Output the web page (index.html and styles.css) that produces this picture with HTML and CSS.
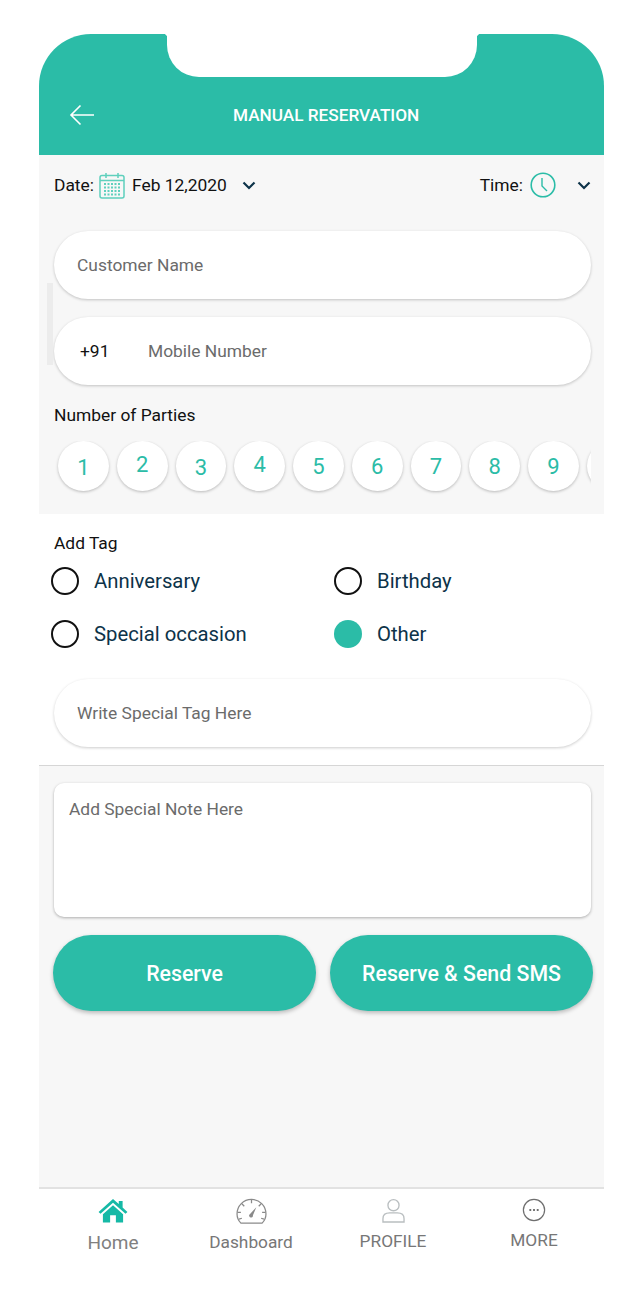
FILE: index.html
```html
<!DOCTYPE html>
<html lang="en">

<head>
    <meta charset="UTF-8" />
    <title>Manual Reservation</title>
    <link rel="stylesheet" href="styles.css">
</head>

<body>
    <div class="phone">

        <header class="topbar">
            <div class="notch"></div>
            <svg class="back" width="26" height="22" viewBox="0 0 26 22" fill="none" stroke="#fff" stroke-width="1.6">
                <path d="M25 11H2M11.500 1.500 2 11l9.500 9.500" />
            </svg>
            <h1>MANUAL RESERVATION</h1>
        </header>

        <section class="grey-part">
            <div class="when">
                <div class="when-left">
                    <span>Date:</span>
                    <svg class="cal" width="26" height="27" viewBox="0 0 26 27" fill="none" stroke="#5fd0bd" stroke-width="1.500">
                        <rect x="1" y="3.500" width="24" height="22.500" rx="2" />
                        <path d="M1 8.500h24M7 1v5M19 1v5" />
                        <path d="M5 12h16M5 15.500h16M5 19h16M5 22.500h16" stroke-width="1.800" stroke-dasharray="2 1.500" />
                    </svg>
                    <span class="date">Feb 12,2020</span>
                    <svg class="chev" width="14" height="9" viewBox="0 0 14 9" fill="none" stroke="#0d3349" stroke-width="2.200">
                        <path d="M1.500 1.500 7 7l5.500-5.500" />
                    </svg>
                </div>
                <div class="when-right">
                    <span>Time:</span>
                    <svg class="clock" width="26" height="26" viewBox="0 0 26 26" fill="none" stroke="#2bbca7" stroke-width="1.600">
                        <circle cx="13" cy="13" r="11.800" />
                        <path d="M12 6v8l5 5" stroke-width="1.400" />
                    </svg>
                    <svg class="chev" width="14" height="9" viewBox="0 0 14 9" fill="none" stroke="#0d3349" stroke-width="2.200">
                        <path d="M1.500 1.500 7 7l5.500-5.500" />
                    </svg>
                </div>
            </div>

            <div class="field">Customer Name</div>
            <div class="field field-phone"><span class="code">+91</span>Mobile Number</div>

            <h2 class="parties-title">Number of Parties</h2>
            <div class="parties">
                <div class="num low">1</div>
                <div class="num high">2</div>
                <div class="num low">3</div>
                <div class="num high">4</div>
                <div class="num">5</div>
                <div class="num">6</div>
                <div class="num">7</div>
                <div class="num">8</div>
                <div class="num">9</div>
                <div class="num"></div>
            </div>
        </section>

        <section class="tag-part">
            <h2>Add Tag</h2>
            <div class="tags">
                <div class="tag"><span class="radio"></span>Anniversary</div>
                <div class="tag"><span class="radio"></span>Birthday</div>
                <div class="tag"><span class="radio"></span>Special occasion</div>
                <div class="tag"><span class="radio on"></span>Other</div>
            </div>
            <div class="field field-tag">Write Special Tag Here</div>
        </section>

        <section class="note-part">
            <div class="note">Add Special Note Here</div>
            <div class="buttons">
                <button>Reserve</button>
                <button>Reserve &amp; Send SMS</button>
            </div>
        </section>

        <nav class="tabs">
            <div class="tab tab-home">
                <svg width="32" height="25" viewBox="0 0 32 26">
                    <path fill="#16b9a6" d="M16 1 1 14.500l2 2L16 5l13 11.500 2-2-5-4.600V3h-4v3.200z" />
                    <path fill="#16b9a6" d="M16 7.500 5.500 17v8.500H13V18h6v7.500h7.500V17z" />
                </svg>
                <span>Home</span>
            </div>
            <div class="tab tab-dash">
                <svg width="31" height="27" viewBox="0 0 32 28" fill="none" stroke="#8a8a8a" stroke-width="1.300">
                    <path d="M5 26C2.500 23.500 1 20 1 16.500 1 8 7.700 1.500 16 1.500S31 8 31 16.500c0 3.500-1.500 7-4 9.500z" />
                    <path d="M16 2v3.500M6 6l2.500 2.500M26 6l-2.500 2.500M1.500 15H5M27 15h3.500M3 22l3-1M29 22l-3-1" />
                    <path fill="#8a8a8a" stroke="none" d="M21 9.500 17.500 18a2 2 0 1 1-3-1.500z" />
                </svg>
                <span>Dashboard</span>
            </div>
            <div class="tab tab-profile">
                <svg width="23" height="25" viewBox="0 0 24 26" fill="none" stroke="#b9bec0" stroke-width="1.400">
                    <circle cx="12" cy="7.500" r="5.800" />
                    <path d="M1 25v-3.500C1 17.500 4 15.500 8 15.500h8c4 0 7 2 7 6V25z" />
                </svg>
                <span>PROFILE</span>
            </div>
            <div class="tab tab-more">
                <svg width="24" height="24" viewBox="0 0 26 26" fill="none" stroke="#6f6f6f" stroke-width="1.300">
                    <circle cx="13" cy="13" r="11.500" />
                    <path stroke-width="2" stroke-dasharray="2 2" d="M8 13h10" />
                </svg>
                <span>MORE</span>
            </div>
        </nav>

        <div class="scroll-thumb"></div>
    </div>
</body>

</html>
```

FILE: styles.css
```css
* {
    box-sizing: border-box;
    margin: 0;
    padding: 0;
}

body {
    font-family: Roboto, sans-serif;
    background-color: #ffffff;
    color: #111111;
}

.phone {
    position: relative;
    width: 565px;
    margin: 34px 0 0 39px;
}

.topbar {
    position: relative;
    height: 121px;
    background-color: #2bbca7;
    border-radius: 52px 52px 0 0;
    display: flex;
    align-items: center;
    padding: 41px 0 0 30px;
}

.notch {
    position: absolute;
    top: 0;
    left: 128px;
    width: 310px;
    height: 43px;
    background-color: #ffffff;
    border-radius: 0 0 32px 32px;
}

/* small outward curve where the notch meets the top edge */
.notch::before,
.notch::after {
    content: "";
    position: absolute;
    top: 0;
    width: 4px;
    height: 4px;
}

.notch::before {
    left: -4px;
    background: radial-gradient(circle at 0 100%, transparent 4px, #ffffff 4.500px);
}

.notch::after {
    right: -4px;
    background: radial-gradient(circle at 100% 100%, transparent 4px, #ffffff 4.500px);
}

.topbar h1 {
    font-size: 17.2px;
    font-weight: 500;
    color: #ffffff;
    margin-left: 138px;
}

.back {
    flex-shrink: 0;
}

.grey-part {
    height: 359px;
    background-color: #f7f7f7;
    padding: 0 13px 0 15px;
}

.when {
    display: flex;
    justify-content: space-between;
    align-items: center;
    height: 60px;
    margin-bottom: 16px;
    font-size: 17.4px;
}

.when-left,
.when-right {
    display: flex;
    align-items: center;
}

.cal {
    margin: 0 7px 0 5px;
}

.chev {
    margin-left: 15px;
}

.clock {
    margin-left: 7px;
}

.when-right .chev {
    margin-left: 21px;
}

.field {
    height: 68px;
    border-radius: 34px;
    background-color: #ffffff;
    box-shadow: 0 1px 3px rgba(0, 0, 0, 0.22);
    display: flex;
    align-items: center;
    padding-left: 23px;
    font-size: 17.4px;
    color: #6b6b6b;
}

.field-phone {
    margin-top: 18px;
    padding-left: 26px;
}

.code {
    width: 68px;
    color: #111111;
}

h2 {
    font-size: 17.4px;
    font-weight: 400;
}

.parties-title {
    margin: 20px 0 16px;
}

.parties {
    display: flex;
    gap: 8px;
    padding: 0 0 4px 4px;
    overflow: hidden;
}

.num {
    flex: 0 0 50.75px;
    height: 50px;
    border-radius: 50%;
    background-color: #ffffff;
    box-shadow: 0 1px 3px rgba(0, 0, 0, 0.25);
    display: flex;
    align-items: center;
    justify-content: center;
    font-size: 22px;
    color: #2bbca7;
}

.low {
    padding-top: 3px;
}

.high {
    padding-bottom: 3px;
}

.tag-part {
    height: 252px;
    background-color: #ffffff;
    border-bottom: 1px solid #d6d6d6;
    padding: 19px 13px 0 15px;
}

.tags {
    display: grid;
    grid-template-columns: 283px 1fr;
    row-gap: 25px;
    margin: 14px 0 31px -3px;
}

.tag {
    display: flex;
    align-items: center;
    gap: 15px;
    font-size: 20.3px;
    color: #0d3349;
}

.radio {
    width: 28px;
    height: 28px;
    border-radius: 50%;
    border: 2px solid #111111;
}

.radio.on {
    border: none;
    background-color: #2bbca7;
}

.field-tag {
    box-shadow: 0 1px 3px rgba(0, 0, 0, 0.2);
}

.note-part {
    height: 421px;
    background-color: #f7f7f7;
    padding: 17px 13px 0 15px;
}

.note {
    height: 134px;
    border-radius: 10px;
    background-color: #ffffff;
    box-shadow: 0 1px 3px rgba(0, 0, 0, 0.3);
    padding: 16px 15px;
    font-size: 17.4px;
    color: #6b6b6b;
}

.buttons {
    display: flex;
    gap: 14px;
    margin: 18px -2px 0 -1px;
}

.buttons button {
    flex: 1;
    height: 76px;
    border: none;
    border-radius: 38px;
    background-color: #2bbca7;
    box-shadow: 0 2px 4px rgba(0, 0, 0, 0.25);
    font-family: Roboto, sans-serif;
    font-size: 21.3px;
    font-weight: 500;
    color: #ffffff;
}

.tabs {
    display: flex;
    height: 80px;
    border-top: 2px solid #e2e2e2;
    font-size: 17.3px;
    color: #777777;
}

.tab {
    display: flex;
    flex-direction: column;
    align-items: center;
    padding-top: 9px;
}

.tab svg {
    margin-bottom: 8px;
}

.tab-home {
    width: 148px;
    font-size: 19px;
    color: #808080;
}

.tab-dash {
    width: 128px;
}

.tab-dash svg {
    margin-bottom: 7px;
}

.tab-profile {
    width: 156px;
}

.tab-more {
    width: 126px;
}

.scroll-thumb {
    position: absolute;
    top: 249px;
    left: 8px;
    width: 6px;
    height: 82px;
    background-color: #ececec;
}
```
